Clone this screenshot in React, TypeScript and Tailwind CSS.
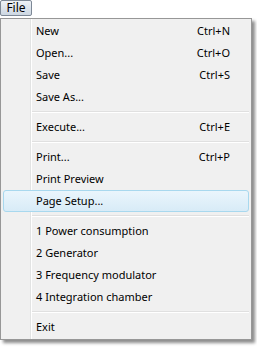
import React from 'react';

type Item = { label: string; shortcut?: string; active?: boolean } | 'sep';

const ITEMS: Item[] = [
  { label: 'New', shortcut: 'Ctrl+N' },
  { label: 'Open...', shortcut: 'Ctrl+O' },
  { label: 'Save', shortcut: 'Ctrl+S' },
  { label: 'Save As...' },
  'sep',
  { label: 'Execute...', shortcut: 'Ctrl+E' },
  'sep',
  { label: 'Print...', shortcut: 'Ctrl+P' },
  { label: 'Print Preview' },
  { label: 'Page Setup...', active: true },
  'sep',
  { label: '1 Power consumption' },
  { label: '2 Generator' },
  { label: '3 Frequency modulator' },
  { label: '4 Integration chamber' },
  'sep',
  { label: 'Exit' },
];

export default function App() {
  return (
    <div className="flex h-[347px] w-[257px] flex-col bg-white font-['Noto_Sans',sans-serif] text-[11px] text-black">
      <div className="flex h-[16px] w-[32px] items-center justify-center rounded-[2px] border border-[#7d8896] bg-gradient-to-b from-[#eef2f7] to-[#cdd7e2] text-[12px] leading-none">
        File
      </div>

      <div className="relative mt-[2px] w-[252px] border border-[#979797] bg-[#f0f0f0] px-[2px] py-[1px] shadow-[3px_3px_3px_rgba(0,0,0,0.45)]">
        <div className="absolute bottom-0 left-[29px] top-0 w-[2px] border-l border-[#e2e3e3] bg-white" />
        {ITEMS.map((item, i) =>
          item === 'sep' ? (
            <div key={i} className="flex h-[8px] flex-col justify-center pl-[29px]">
              <div className="h-[1px] bg-[#e0e0e0]" />
              <div className="h-[1px] bg-white" />
            </div>
          ) : (
            <div
              key={i}
              className={
                item.active
                  ? 'relative flex h-[22px] items-center justify-between rounded-[3px] border border-[#a8d8ee] bg-gradient-to-b from-[#eaf5fc] to-[#d8ebf7] pl-[32px] pr-[18px]'
                  : 'relative flex h-[22px] items-center justify-between pl-[33px] pr-[19px]'
              }
            >
              <span>{item.label}</span>
              {item.shortcut && <span>{item.shortcut}</span>}
            </div>
          )
        )}
      </div>
    </div>
  );
}
